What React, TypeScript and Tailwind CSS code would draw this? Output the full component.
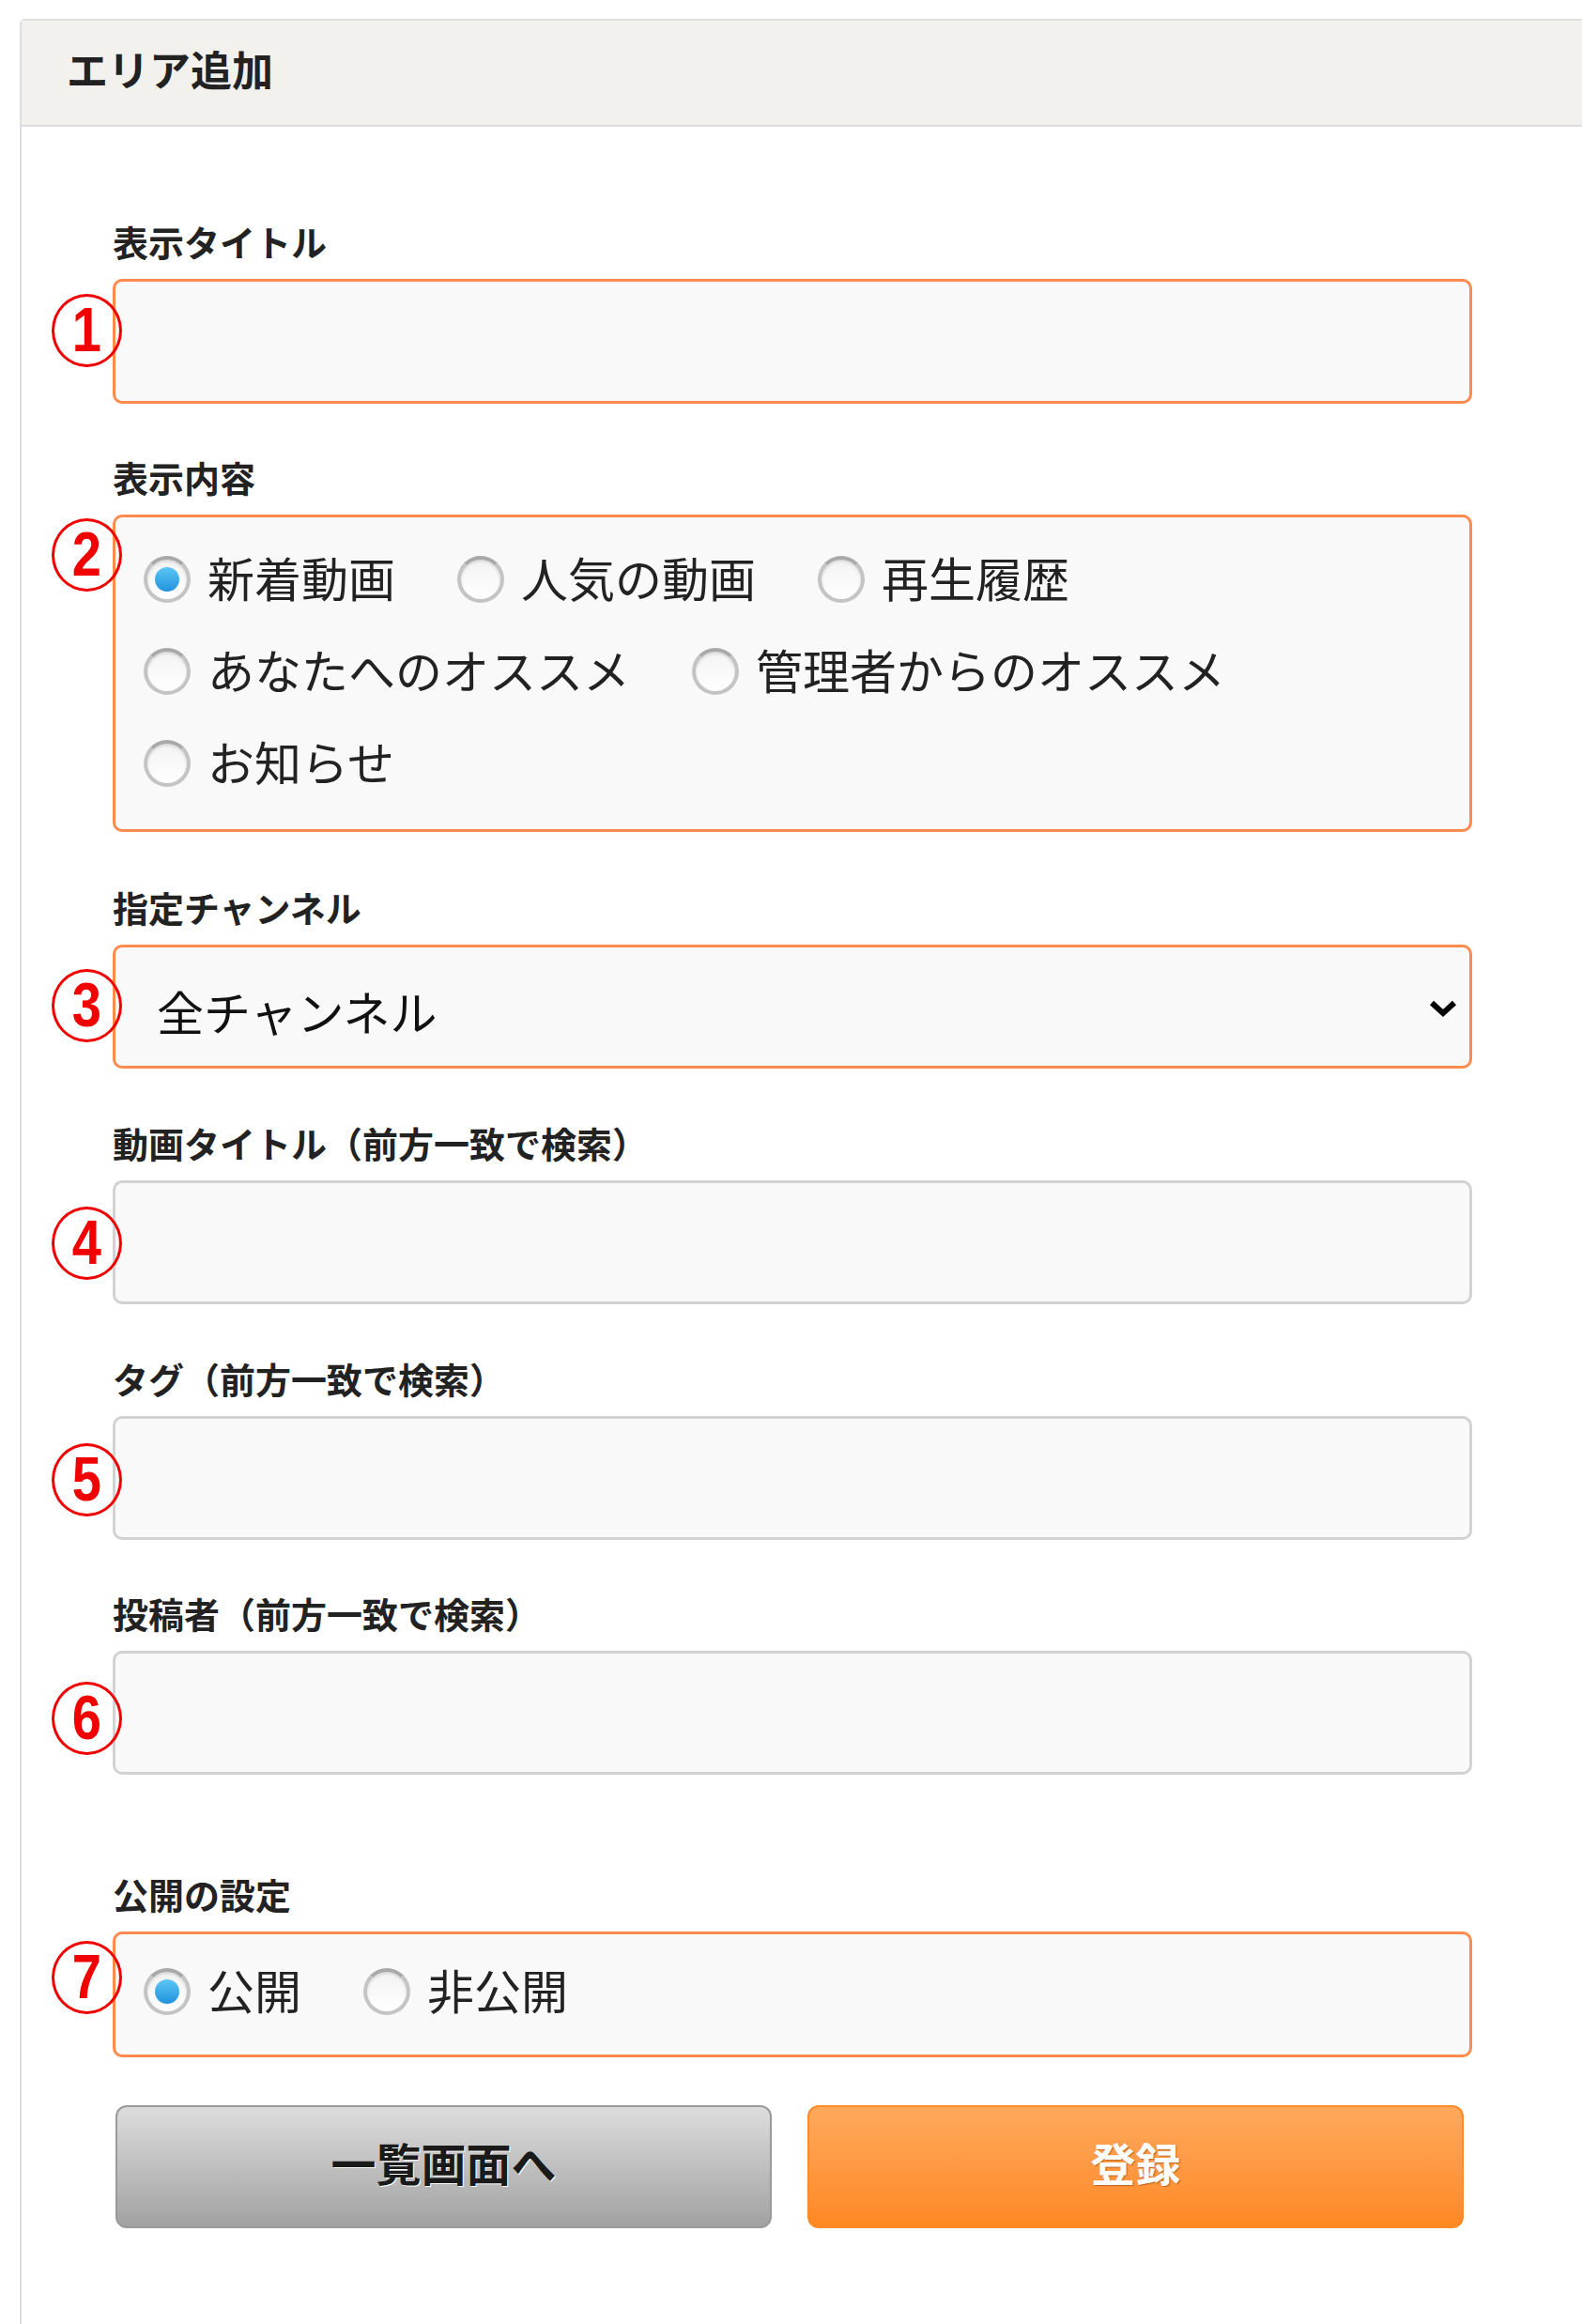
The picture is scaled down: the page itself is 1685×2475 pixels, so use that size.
import type { ReactNode } from 'react'

const jp = { fontFamily: '"Noto Sans CJK JP", "Noto Sans", sans-serif' }

function Num({ n, top }: { n: string; top: number }) {
  return (
    <div
      className="absolute left-[-65px] w-[75px] h-[78px] rounded-[50%] border-[3px] border-[#f00000] flex items-center justify-center text-[#f00000] font-bold text-[66px] leading-none pb-[2px]"
      style={{ top, fontFamily: '"Liberation Sans", Arial, sans-serif' }}
    >
      <span className="inline-block scale-x-[0.85]">{n}</span>
    </div>
  )
}

function Radio({ checked }: { checked?: boolean }) {
  return (
    <span className="w-[50px] h-[50px] rounded-full border-[4px] border-[#c4c4c4] border-t-[#a9a9a9] bg-gradient-to-b from-[#f3f3f3] to-white flex items-center justify-center shrink-0 shadow-[inset_0_2px_3px_rgba(0,0,0,0.12)]">
      {checked && <span className="w-[26px] h-[26px] rounded-full bg-gradient-to-b from-[#5cc6f5] to-[#1d93dc]" />}
    </span>
  )
}

function Option({ label, checked }: { label: string; checked?: boolean }) {
  return (
    <label className="flex items-center h-[98px] mr-[66px]">
      <Radio checked={checked} />
      <span className="ml-[18px] text-[50px] leading-none text-[#222] pb-[6px]">{label}</span>
    </label>
  )
}

function Field({
  label,
  num,
  numTop,
  className,
  children,
}: {
  label: string
  num: string
  numTop: number
  className: string
  children: ReactNode
}) {
  return (
    <div className={className}>
      <div className="h-[40px] leading-[40px] text-[38px] font-bold text-[#222] whitespace-nowrap">{label}</div>
      <div className="relative mt-[20px] w-[1448px]">
        {children}
        <Num n={num} top={numTop} />
      </div>
    </div>
  )
}

export default function App() {
  const orangeBox = 'w-full rounded-[10px] border-[3px] border-[#ff8a4d] bg-[#f9f9f9]'
  const grayBox = 'w-full h-[132px] rounded-[10px] border-[3px] border-[#d2d2d2] bg-[#f9f9f9]'

  return (
    <div className="w-[1685px] min-h-[2475px] bg-white pt-[20px] pl-[21px] overflow-hidden" style={jp}>
      <div className="min-h-[2455px] border-t-2 border-l-2 border-[#dedede] rounded-tl-[6px]">
        {/* header */}
        <div className="h-[113px] bg-[#f2f1ee] border-b-2 border-[#dcdcdc] flex items-center pl-[48px] pb-[10px]">
          <h1 className="text-[44px] font-bold text-[#222] leading-none">エリア追加</h1>
        </div>

        <div className="pl-[97px] pt-[102px] pb-[100px]">
          <Field label="表示タイトル" num="1" numTop={16} className="">
            <div className={`${orangeBox} h-[133px]`} />
          </Field>

          <Field label="表示内容" num="2" numTop={4} className="mt-[58px]">
            <div className={`${orangeBox} h-[338px] pl-[30px] pt-[17px] flex flex-wrap content-start`}>
              <Option label="新着動画" checked />
              <Option label="人気の動画" />
              <Option label="再生履歴" />
              <Option label="あなたへのオススメ" />
              <Option label="管理者からのオススメ" />
              <Option label="お知らせ" />
            </div>
          </Field>

          <Field label="指定チャンネル" num="3" numTop={26} className="mt-[60px]">
            <div className={`${orangeBox} h-[132px] flex items-center justify-between pl-[44px] pr-[12px]`}>
              <span className="text-[50px] leading-none text-[#111] pt-[8px]">全チャンネル</span>
              <svg width="32" height="22" viewBox="0 0 32 22" className="mt-[4px]">
                <path d="M4 5 L16 16 L28 5" fill="none" stroke="#000" strokeWidth="6" strokeLinejoin="miter" />
              </svg>
            </div>
          </Field>

          <Field label="動画タイトル（前方一致で検索）" num="4" numTop={28} className="mt-[59px]">
            <div className={grayBox} />
          </Field>

          <Field label="タグ（前方一致で検索）" num="5" numTop={29} className="mt-[59px]">
            <div className={grayBox} />
          </Field>

          <Field label="投稿者（前方一致で検索）" num="6" numTop={33} className="mt-[58px]">
            <div className={grayBox} />
          </Field>

          <Field label="公開の設定" num="7" numTop={10} className="mt-[107px]">
            <div className={`${orangeBox} h-[134px] pl-[30px] pb-[6px] flex items-center`}>
              <Option label="公開" checked />
              <Option label="非公開" />
            </div>
          </Field>

          <div className="mt-[51px] ml-[3px] flex gap-[38px]">
            <button className="w-[699px] h-[131px] rounded-[12px] border-2 border-[#9a9a9a] bg-gradient-to-b from-[#dddddd] to-[#a2a2a2] text-[48px] font-bold text-[#1a1a1a] pb-[12px] [text-shadow:1px_1px_0_#fff]">
              一覧画面へ
            </button>
            <button className="w-[699px] h-[131px] rounded-[12px] border-2 border-[#ff8a2a] bg-gradient-to-b from-[#ffa95c] to-[#ff8820] text-[48px] font-bold text-white pb-[12px] [text-shadow:1px_1px_1px_rgba(120,50,0,0.5)]">
              登録
            </button>
          </div>
        </div>
      </div>
    </div>
  )
}
